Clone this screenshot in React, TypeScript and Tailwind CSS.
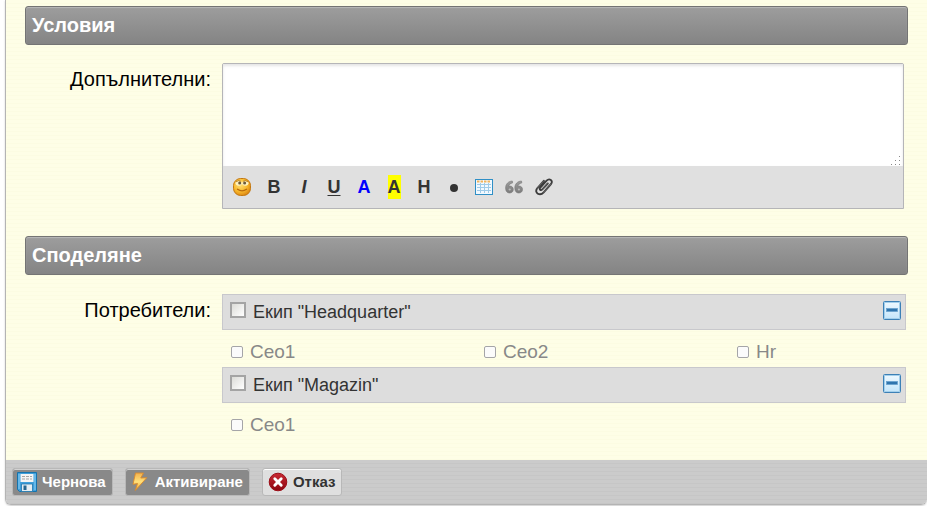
import type { ReactNode } from 'react';

function SectionTitle({ children }: { children: ReactNode }) {
  return (
    <h2 className="flex h-[39px] items-center rounded-[3px] border border-[#747474] bg-linear-to-b from-[#9d9d9d] to-[#848484] px-1.5 pb-0.5 text-[20px] leading-6 font-bold text-white shadow-[inset_0_1px_1px_#b8b8b8]">
      {children}
    </h2>
  );
}

function SmileIcon() {
  return (
    <svg width="20" height="20" viewBox="0 0 20 20" aria-hidden="true">
      <defs>
        <radialGradient id="face" cx="0.4" cy="0.35" r="0.7">
          <stop offset="0" stopColor="#ffe27a" />
          <stop offset="0.6" stopColor="#f8b82c" />
          <stop offset="1" stopColor="#d98212" />
        </radialGradient>
      </defs>
      <rect x="1.500" y="1.500" width="17" height="17" rx="7.200" fill="url(#face)" stroke="#c4780f" />
      <ellipse cx="6.700" cy="6.300" rx="3.100" ry="2.400" fill="#fff3c2" />
      <ellipse cx="13.300" cy="6.300" rx="3.100" ry="2.400" fill="#fff3c2" />
      <circle cx="7.700" cy="6" r="1.500" fill="#6b5a3c" />
      <circle cx="12.600" cy="6" r="1.500" fill="#6b5a3c" />
      <path d="M4 4.800q2.500-2 5-.5M11 4.300q2.500-1.500 5 .5" fill="none" stroke="#a8731f" strokeWidth="0.800" />
      <path d="M5.500 12.300q4.500 3.200 9 0" fill="none" stroke="#b8690c" strokeWidth="1.300" strokeLinecap="round" />
    </svg>
  );
}

function TableIcon() {
  return (
    <svg width="18" height="18" viewBox="0 0 18 18" aria-hidden="true">
      <rect x="0.500" y="1.500" width="17" height="15" fill="#f1f9ff" stroke="#2f8fc6" />
      <path d="M2 3.500h14" stroke="#f1b45c" strokeWidth="2" strokeDasharray="2.500 1" />
      <path d="M2 6.500h14M2 9.500h14M2 12.500h14M5.500 5v10M9.500 5v10M13.500 5v10" stroke="#9fcbe8" />
    </svg>
  );
}

function QuoteIcon() {
  return (
    <svg width="18" height="14" viewBox="0 0 18 14" aria-hidden="true">
      <defs>
        <linearGradient id="quote" x1="0" y1="0" x2="0" y2="1">
          <stop offset="0" stopColor="#9d9d9d" />
          <stop offset="1" stopColor="#7c7c7c" />
        </linearGradient>
      </defs>
      <g fill="url(#quote)" stroke="#777" strokeWidth="0.600">
        <path d="M7.300 1C3.300 1.200.600 4 .600 8c0 3.200 1.500 5 4 5 2.200 0 3.700-1.400 3.700-3.500 0-2-1.300-3.400-3.200-3.400-.600 0-1 .1-1.400.300C4 4.500 5.300 3.300 7.600 2.900z" />
        <path d="M16.500 1c-4 .2-6.700 3-6.700 7 0 3.200 1.500 5 4 5 2.200 0 3.700-1.400 3.700-3.500 0-2-1.300-3.400-3.200-3.400-.600 0-1 .1-1.400.300.300-1.900 1.600-3.100 3.900-3.500z" />
      </g>
      <circle cx="4.700" cy="9.500" r="1.100" fill="#bbb" />
      <circle cx="13.900" cy="9.500" r="1.100" fill="#bbb" />
    </svg>
  );
}

function ClipIcon() {
  return (
    <svg width="18" height="18" viewBox="0 0 18 18" fill="none" strokeLinecap="round" strokeLinejoin="round" aria-hidden="true">
      <path
        d="M12.800 5.500 7.300 11.300c-1.600 1.700-3.500 0-2-1.700l6.300-6.900c2.800-2.900 7-.1 4.400 3.300L8.700 14.300c-3.800 4.300-9.600.7-6.700-3.700L8.800 2.800"
        stroke="#3c3c3c"
        strokeWidth="1.900"
      />
      <path d="M12.800 5.500 7.300 11.300M2 10.600 8.800 2.800M8.700 14.300 16 6" stroke="#8a8a8a" strokeWidth="0.500" />
    </svg>
  );
}

function MinusIcon() {
  return (
    <svg width="18" height="19" viewBox="0 0 18 19" aria-hidden="true">
      <defs>
        <linearGradient id="fold" x1="0" y1="0" x2="0" y2="1">
          <stop offset="0" stopColor="#eff9ff" />
          <stop offset="1" stopColor="#c3e5fa" />
        </linearGradient>
      </defs>
      <rect x="0.500" y="0.500" width="17" height="18" rx="1" fill="url(#fold)" stroke="#3c80b6" />
      <rect x="1.500" y="1.500" width="15" height="16" fill="none" stroke="#a3cfeb" />
      <rect x="3.500" y="7.500" width="11" height="3" fill="#2f75ae" stroke="#6aa2ce" strokeWidth="0.800" />
    </svg>
  );
}

function SaveIcon() {
  return (
    <svg width="20" height="20" viewBox="0 0 20 20" aria-hidden="true">
      <path d="M.500.500h19v19H2.500l-2-2z" fill="#3f9fdb" stroke="#1673ad" />
      <path d="M3.500 2h13v8h-13z" fill="#f4f4f4" />
      <path d="M5 4.500h10M5 7h10" stroke="#a5a5a5" strokeDasharray="3 1" />
      <path d="M4.500 12h11v7.500h-11z" fill="#e5edf2" stroke="#1d75ac" strokeWidth="0.800" />
      <path d="M6.500 13.500h3V18h-3z" fill="#28678f" />
      <path d="M2 2v15M18 2v16" stroke="#8bd0f7" />
    </svg>
  );
}

function BoltIcon() {
  return (
    <svg width="20" height="20" viewBox="0 0 20 20" aria-hidden="true">
      <defs>
        <linearGradient id="bolt" x1="0" y1="0" x2="0" y2="1">
          <stop offset="0" stopColor="#f2b04c" />
          <stop offset="0.500" stopColor="#ffe07a" />
          <stop offset="1" stopColor="#f5a52d" />
        </linearGradient>
      </defs>
      <path d="M5.500 1h8l-2.700 5 6-.3L5.300 18.500l2.200-7-4.500.8z" fill="url(#bolt)" stroke="#d98a2d" strokeWidth="0.900" strokeLinejoin="round" />
    </svg>
  );
}

function CancelIcon() {
  return (
    <svg width="20" height="20" viewBox="0 0 20 20" aria-hidden="true">
      <defs>
        <linearGradient id="stop" x1="0" y1="0" x2="0" y2="1">
          <stop offset="0" stopColor="#c92a34" />
          <stop offset="1" stopColor="#8c0610" />
        </linearGradient>
      </defs>
      <circle cx="10" cy="10" r="8.800" fill="url(#stop)" stroke="#9c0d17" />
      <path d="m6.800 6.800 6.400 6.400m0-6.400-6.400 6.400" stroke="#fff" strokeWidth="2.900" strokeLinecap="round" />
    </svg>
  );
}

function ToolButton({ label, children }: { label: string; children: ReactNode }) {
  return (
    <button type="button" aria-label={label} className="flex h-6 w-[30px] items-center justify-center">
      {children}
    </button>
  );
}

function Team({ id, name, members }: { id: string; name: string; members: string[] }) {
  return (
    <div>
      <div className="flex h-9 items-center border border-[#c8c8cc] bg-[#dddddd] pr-1 pl-[7px]">
        <input
          id={id}
          type="checkbox"
          className="mb-1 size-4 appearance-none border-2 border-[#a4a4a4] bg-linear-to-br from-[#dcdcd8] to-white checked:from-[#666] checked:to-[#666]"
        />
        <label htmlFor={id} className="ml-[7px] grow text-[18px] leading-6 text-[#333]">
          {name}
        </label>
        <button type="button" aria-label="Скриване" className="mb-1">
          <MinusIcon />
        </button>
      </div>
      <div className="grid h-[37px] grid-cols-[253fr_253fr_169fr] items-center pt-1.5 pl-[9px]">
        {members.map((member) => (
          <div key={member} className="flex items-center">
            <input
              id={id + member}
              type="checkbox"
              className="size-3 appearance-none rounded-[2px] border border-[#a5a5a8] bg-[#fbfbfb] checked:bg-[#666]"
            />
            <label htmlFor={id + member} className="ml-[7px] text-[19px] leading-6 text-[#888]">
              {member}
            </label>
          </div>
        ))}
      </div>
    </div>
  );
}

const darkButton =
  'flex h-7 items-center gap-[5px] rounded-[3px] border border-[#b8b8b8] bg-[#898989] px-1 pr-1.5 text-[15px] leading-5 font-bold text-white shadow-[inset_0_1px_0_#d2d2d2]';

export default function App() {
  return (
    <div className="bg-white pb-0.5 pl-[5px] font-['Liberation_Sans',Arial,sans-serif]">
      <form className="overflow-hidden rounded-b-md border border-t-0 border-r-0 border-[#b4b4b4] shadow-[0_1px_2px_#ccc]">
        <div className="bg-[#fefee6] bg-[repeating-linear-gradient(0deg,#fcfce2_0_1px,transparent_1px_4px)] pt-1.5 pr-[19px] pb-5 pl-[19px]">
          <SectionTitle>Условия</SectionTitle>
          <div className="mt-[18px] flex items-start pr-1">
            <label htmlFor="terms" className="mt-1 w-[186px] shrink-0 text-right text-[20px] leading-6 text-black">
              Допълнителни:
            </label>
            <div className="ml-[11px] grow rounded-t-[2px] border border-[#b5b5b8] bg-[#e0e0e0]">
              <div className="relative">
                <textarea
                  id="terms"
                  className="block h-[102px] w-full resize-none bg-white px-2 py-1 text-base shadow-[inset_0_2px_3px_#e5e5e5] outline-none"
                />
                <svg className="absolute right-0.5 bottom-px" width="10" height="9" viewBox="0 0 10 9" aria-hidden="true">
                  <path d="M8 0h1v1H8zM4 4h1v1H4zM8 4h1v1H8zM0 8h1v1H0zM4 8h1v1H4zM8 8h1v1H8z" fill="#888" />
                </svg>
              </div>
              <div className="flex h-[42px] items-center pl-1.5 text-[18px] leading-6 font-bold text-[#333]">
                <ToolButton label="Емотикони"><span className="mr-1"><SmileIcon /></span></ToolButton>
                <ToolButton label="Удебелен"><span>B</span></ToolButton>
                <ToolButton label="Курсив"><span className="italic">I</span></ToolButton>
                <ToolButton label="Подчертан"><span className="underline decoration-1 underline-offset-2">U</span></ToolButton>
                <ToolButton label="Цвят на текста"><span className="text-[#0000ff]">A</span></ToolButton>
                <ToolButton label="Цвят на фона"><span className="bg-[#ffff00]">A</span></ToolButton>
                <ToolButton label="Заглавие"><span>H</span></ToolButton>
                <ToolButton label="Списък"><span className="mt-0.5 size-2 rounded-full bg-[#333]" /></ToolButton>
                <ToolButton label="Таблица"><TableIcon /></ToolButton>
                <ToolButton label="Цитат"><QuoteIcon /></ToolButton>
                <ToolButton label="Файл"><ClipIcon /></ToolButton>
              </div>
            </div>
          </div>
          <div className="mt-[27px]">
            <SectionTitle>Споделяне</SectionTitle>
          </div>
          <div role="group" aria-labelledby="users" className="mt-[19px] flex items-start pr-0.5">
            <span id="users" className="mt-1 w-[186px] shrink-0 text-right text-[20px] leading-6 text-black">
              Потребители:
            </span>
            <div className="ml-[11px] grow">
              <Team id="headquarter" name={'Екип "Headquarter"'} members={['Ceo1', 'Ceo2', 'Hr']} />
              <Team id="magazin" name={'Екип "Magazin"'} members={['Ceo1']} />
            </div>
          </div>
        </div>
        <div className="flex h-11 items-center gap-3 bg-[#cbcbcb] bg-[repeating-linear-gradient(0deg,#c6c6c6_0_1px,transparent_1px_4px)] pl-1.5">
          <button type="button" className={darkButton}>
            <SaveIcon />
            Чернова
          </button>
          <button type="button" className={darkButton}>
            <BoltIcon />
            Активиране
          </button>
          <button
            type="button"
            className="flex h-7 items-center gap-[5px] rounded-[3px] border border-[#b8b8b8] bg-[#dfdfdf] pr-1.5 pl-[5px] text-[15px] leading-5 font-bold text-[#333] shadow-[inset_0_1px_0_#fff]"
          >
            <CancelIcon />
            Отказ
          </button>
        </div>
      </form>
    </div>
  );
}
